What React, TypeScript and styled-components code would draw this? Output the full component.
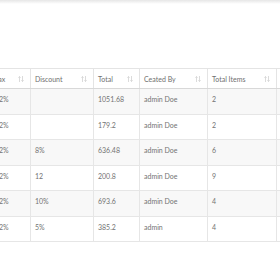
import styled, { createGlobalStyle } from 'styled-components'

const GlobalStyle = createGlobalStyle`
  html, body {
    margin: 0;
    padding: 0;
    background: #fff;
    overflow: hidden;
  }
  body {
    font-family: Lato, "Liberation Sans", sans-serif;
  }
`

type Order = {
  tax: string
  discount: string
  total: string
  createdBy: string
  items: string
}

const orders: Order[] = [
  { tax: '12%', discount: '', total: '1051.68', createdBy: 'admin Doe', items: '2' },
  { tax: '12%', discount: '', total: '179.2', createdBy: 'admin Doe', items: '2' },
  { tax: '12%', discount: '8%', total: '636.48', createdBy: 'admin Doe', items: '6' },
  { tax: '12%', discount: '12', total: '200.8', createdBy: 'admin Doe', items: '9' },
  { tax: '12%', discount: '10%', total: '693.6', createdBy: 'admin Doe', items: '4' },
  { tax: '12%', discount: '5%', total: '385.2', createdBy: 'admin', items: '4' },
]

// last column is scrolled off to the right, only its edge shows
const columns = [
  { label: 'Tax', width: 40 },
  { label: 'Discount', width: 63 },
  { label: 'Total', width: 46 },
  { label: 'Ceated By', width: 68 },
  { label: 'Total Items', width: 69 },
  { label: '', width: 60 },
]

const tableWidth = columns.reduce((sum, c) => sum + c.width, 0)

const SortIcon = () => (
  <svg width="6" height="6" viewBox="0 0 6 6" fill="none" stroke="#d2d2d2" strokeWidth="0.8">
    <path d="M1.5 6V0.5M0.4 1.7L1.5 0.5L2.6 1.7" />
    <path d="M4.5 0V5.5M3.4 4.3L4.5 5.5L5.6 4.3" />
  </svg>
)

const App = () => {
  return (
    <Page>
      <GlobalStyle />
      <TopShadow />
      <TableWrap>
        <Table style={{ width: tableWidth }}>
          <colgroup>
            {columns.map((c, i) => (
              <col key={i} style={{ width: c.width }} />
            ))}
          </colgroup>
          <thead>
            <tr>
              {columns.map((c, i) => (
                <HeadCell key={i}>
                  {c.label && (
                    <HeadInner>
                      <span>{c.label}</span>
                      <SortIcon />
                    </HeadInner>
                  )}
                </HeadCell>
              ))}
            </tr>
          </thead>
          <tbody>
            {orders.map((o, i) => (
              <Row key={i} $striped={i % 2 === 0}>
                <Cell>{o.tax}</Cell>
                <Cell>{o.discount}</Cell>
                <Cell>{o.total}</Cell>
                <Cell>{o.createdBy}</Cell>
                <Cell>{o.items}</Cell>
                <Cell></Cell>
              </Row>
            ))}
          </tbody>
        </Table>
      </TableWrap>
    </Page>
  )
}

const Page = styled.div`
  width: 280px;
  height: 280px;
  overflow: hidden;
  background: #fff;
`

const TopShadow = styled.div`
  height: 4px;
  background: linear-gradient(#e6e6e6, #fff);
`

const TableWrap = styled.div`
  margin: 64px 0 0 -10px;
`

const Table = styled.table`
  border-collapse: collapse;
  table-layout: fixed;
  font-size: 7px;
  color: #737373;
`

const HeadCell = styled.th`
  height: 20px;
  box-sizing: border-box;
  padding: 0 6px 0 4px;
  border: 1px solid #e4e4e4;
  border-bottom: 1px solid #d8d8d8;
  font-weight: 400;
  text-align: left;
  color: #6f6f6f;
  background: #fff;
  white-space: nowrap;
`

const HeadInner = styled.div`
  display: flex;
  align-items: center;
  justify-content: space-between;
  line-height: 10px;
`

const Row = styled.tr<{ $striped: boolean }>`
  background: ${(p) => (p.$striped ? '#f8f8f8' : '#fff')};
`

const Cell = styled.td`
  height: 25.5px;
  box-sizing: border-box;
  padding: 5px 4px 0;
  vertical-align: top;
  line-height: 10px;
  border: 1px solid #e6e6e6;
  white-space: nowrap;
`

export default App
